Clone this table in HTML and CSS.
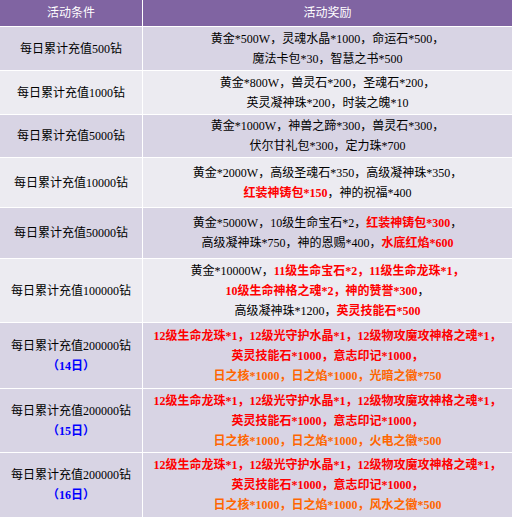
FILE: index.html
```html
<!DOCTYPE html>
<html lang="zh-CN">
<head>
<meta charset="utf-8">
<title>活动</title>
<link rel="stylesheet" href="styles.css">
</head>
<body>
<div class="table">
  <div class="cell head"><div class="txt">活动条件</div></div>
  <div class="cell head"><div class="txt">活动奖励</div></div>

  <div class="cell dark h43"><div class="txt">每日累计充值500钻</div></div>
  <div class="cell dark h43"><div class="txt">黄金*500W，灵魂水晶*1000，命运石*500，<br>魔法卡包*30，智慧之书*500</div></div>

  <div class="cell light h43"><div class="txt">每日累计充值1000钻</div></div>
  <div class="cell light h43"><div class="txt">黄金*800W，兽灵石*200，圣魂石*200，<br>英灵凝神珠*200，时装之魄*10</div></div>

  <div class="cell dark h42"><div class="txt">每日累计充值5000钻</div></div>
  <div class="cell dark h42"><div class="txt">黄金*1000W，神兽之蹄*300，兽灵石*300，<br>伏尔甘礼包*300，定力珠*700</div></div>

  <div class="cell light h49"><div class="txt">每日累计充值10000钻</div></div>
  <div class="cell light h49"><div class="txt">黄金*2000W，高级圣魂石*350，高级凝神珠*350，<br><b class="red">红装神铸包*150</b>，神的祝福*400</div></div>

  <div class="cell dark h50"><div class="txt">每日累计充值50000钻</div></div>
  <div class="cell dark h50"><div class="txt">黄金*5000W，10级生命宝石*2，<b class="red">红装神铸包*300</b>，<br>高级凝神珠*750，神的恩赐*400，<b class="red">水底红焰*600</b></div></div>

  <div class="cell light h63"><div class="txt">每日累计充值100000钻</div></div>
  <div class="cell light h63"><div class="txt">黄金*10000W，<b class="red">11级生命宝石*2，11级生命龙珠*1，</b><br><b class="red">10级生命神格之魂*2，神的赞誉*300</b>，<br>高级凝神珠*1200，<b class="red">英灵技能石*500</b></div></div>

  <div class="cell dark h65"><div class="txt">每日累计充值200000钻<br><b class="blue">（14日）</b></div></div>
  <div class="cell dark h65"><div class="txt"><b class="red">12级生命龙珠*1，12级光守护水晶*1，12级物攻魔攻神格之魂*1，</b><br><b class="red">英灵技能石*1000，意志印记*1000，</b><br><b class="orange">日之核*1000，日之焰*1000，光暗之徽*750</b></div></div>

  <div class="cell dark h63"><div class="txt">每日累计充值200000钻<br><b class="blue">（15日）</b></div></div>
  <div class="cell dark h63"><div class="txt"><b class="red">12级生命龙珠*1，12级光守护水晶*1，12级物攻魔攻神格之魂*1，</b><br><b class="red">英灵技能石*1000，意志印记*1000，</b><br><b class="orange">日之核*1000，日之焰*1000，火电之徽*500</b></div></div>

  <div class="cell dark h64"><div class="txt">每日累计充值200000钻<br><b class="blue">（16日）</b></div></div>
  <div class="cell dark h64"><div class="txt"><b class="red">12级生命龙珠*1，12级光守护水晶*1，12级物攻魔攻神格之魂*1，</b><br><b class="red">英灵技能石*1000，意志印记*1000，</b><br><b class="orange">日之核*1000，日之焰*1000，风水之徽*500</b></div></div>
</div>
</body>
</html>
```

FILE: styles.css
```css
html, body {
  margin: 0;
  padding: 0;
  background: #ffffff;
}

body {
  width: 512px;
  height: 517px;
  overflow: hidden;
  font-family: "Liberation Serif", "Noto Sans CJK SC", serif;
  font-size: 12px;
  color: #000000;
}

.table {
  display: grid;
  grid-template-columns: 142px 369px;
  gap: 1px;
  background: #ffffff;
}

.cell {
  display: flex;
  justify-content: center;
  align-items: center;
  overflow: hidden;
}

.txt {
  text-align: center;
  line-height: 20px;
  white-space: nowrap;
}

.txt b {
  font-weight: bold;
}

.head {
  height: 26px;
  background: #8064a2;
  color: #ffffff;
}

.dark {
  background: #d8d4e4;
}

.light {
  background: #ecebf1;
}

.h42 { height: 42px; }
.h43 { height: 43px; }
.h49 { height: 49px; }
.h50 { height: 50px; }
.h63 { height: 63px; }
.h64 { height: 64px; }
.h65 { height: 65px; }

.red {
  color: #ff0000;
}

.orange {
  color: #ff6600;
}

.blue {
  color: #0000ff;
}
```
